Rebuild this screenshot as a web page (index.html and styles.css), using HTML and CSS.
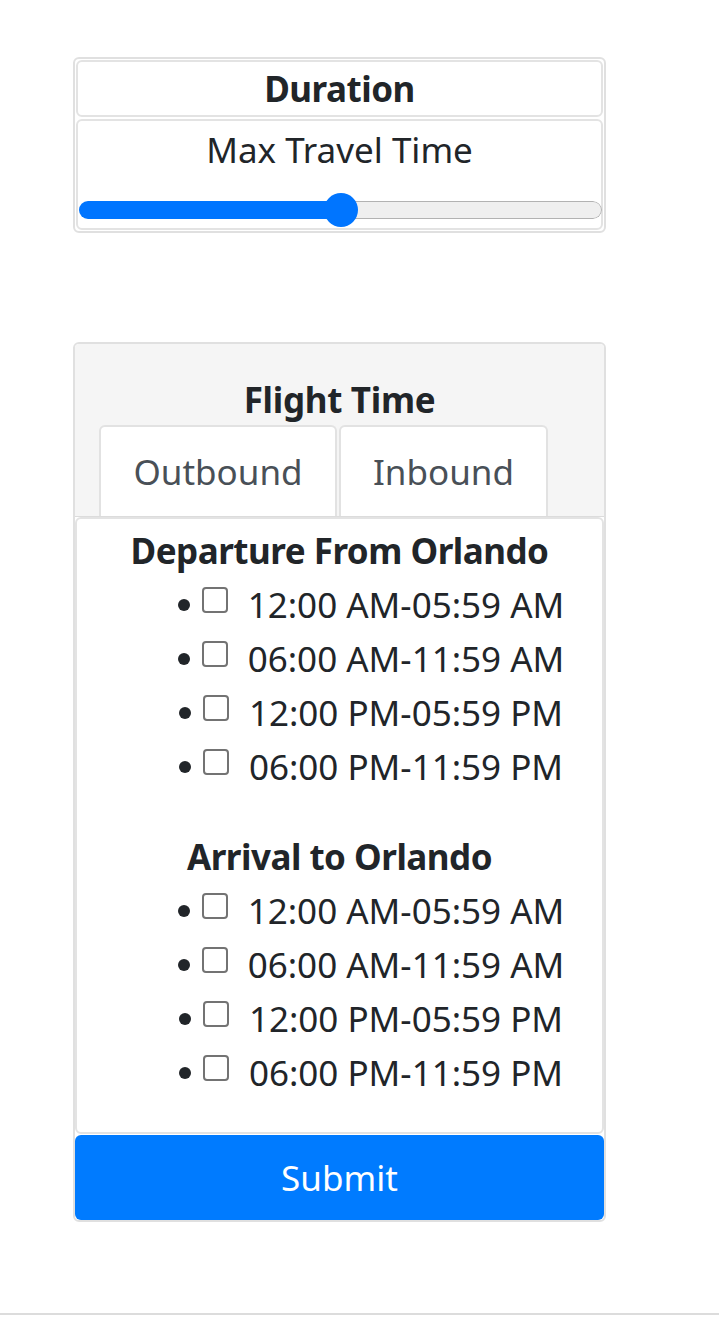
FILE: index.html
```html
<!DOCTYPE html>
<html lang="en">
<head>
<meta charset="utf-8">
<title>Flight filters</title>
<link rel="stylesheet" href="styles.css">
</head>
<body>
<div class="page">
  <section class="card duration">
    <div class="box duration-head">Duration</div>
    <div class="box duration-body">
      <div class="slider-label">Max Travel Time</div>
      <div class="slider" role="slider" aria-valuemin="0" aria-valuemax="100" aria-valuenow="50" aria-label="Max Travel Time">
        <div class="track">
          <div class="fill" style="width:50%"></div>
          <div class="rest"></div>
        </div>
        <div class="thumb" style="left:50%"></div>
      </div>
    </div>
  </section>

  <section class="card flight">
    <div class="flight-head">
      <div class="flight-title">Flight Time</div>
      <div class="tabs">
        <div class="tab tab-out">Outbound</div>
        <div class="tab tab-in">Inbound</div>
      </div>
    </div>
    <div class="box flight-body">
      <div class="group-title">Departure From Orlando</div>
      <ul class="times">
        <li><label><input type="checkbox">12:00 AM-05:59 AM</label></li>
        <li><label><input type="checkbox">06:00 AM-11:59 AM</label></li>
        <li><label><input type="checkbox">12:00 PM-05:59 PM</label></li>
        <li><label><input type="checkbox">06:00 PM-11:59 PM</label></li>
      </ul>
      <div class="group-title">Arrival to Orlando</div>
      <ul class="times last">
        <li><label><input type="checkbox">12:00 AM-05:59 AM</label></li>
        <li><label><input type="checkbox">06:00 AM-11:59 AM</label></li>
        <li><label><input type="checkbox">12:00 PM-05:59 PM</label></li>
        <li><label><input type="checkbox">06:00 PM-11:59 PM</label></li>
      </ul>
    </div>
    <button class="submit" type="button">Submit</button>
  </section>
</div>
<hr class="rule">
</body>
</html>
```

FILE: styles.css
```css
* {
  box-sizing: border-box;
}

body {
  margin: 0;
  background: #fff;
  color: #212529;
  font-family: "Noto Sans", "Open Sans", sans-serif;
  font-size: 35px;
  line-height: 54px;
}

.page {
  padding: 57px 0 0 73px;
}

.card {
  width: 533px;
  border: 2px solid #e0e0e0;
  border-radius: 6px;
  background: #fff;
}

.box {
  border: 2px solid #e3e3e3;
  border-radius: 6px;
  background: #fff;
}

/* Duration card */
.duration {
  padding: 1px;
}

.duration-head {
  text-align: center;
  font-weight: 700;
  letter-spacing: -0.5px;
  line-height: 53px;
}

.duration-body {
  margin-top: 2px;
  padding-top: 2px;
}

.slider-label {
  text-align: center;
}

.slider {
  position: relative;
  width: 523px;
  height: 34px;
  margin: 16px 0 1px 1px;
  padding-top: 8px;
}

.track {
  display: flex;
  height: 18px;
  border-radius: 9px;
  overflow: hidden;
}

.fill {
  background: #0075ff;
}

.rest {
  flex: 1;
  background: #efefef;
  border: 1px solid #b2b2b2;
  border-left: none;
  border-radius: 0 9px 9px 0;
}

.thumb {
  position: absolute;
  top: 0;
  width: 34px;
  height: 34px;
  margin-left: -17px;
  border-radius: 50%;
  background: #0075ff;
}

/* Flight time card */
.flight {
  margin-top: 109px;
  overflow: hidden;
}

.flight-head {
  background: #f5f5f5;
  padding-top: 29px;
  border-bottom: 1px solid #dcdcdc;
}

.flight-title {
  text-align: center;
  font-weight: 700;
  letter-spacing: -0.3px;
}

.tabs {
  display: flex;
  gap: 2px;
  margin: -2px 0 0 24px;
}

.tab {
  background: #fff;
  color: #495057;
  text-align: center;
  padding: 18px 0 17px;
  border: 2px solid #e2e2e2;
  border-bottom: none;
  border-radius: 6px 6px 0 0;
}

.tab-out {
  width: 238px;
}

.tab-in {
  width: 209px;
}

.flight-body {
  padding: 5px 0 32px;
}

.group-title {
  text-align: center;
  font-weight: 700;
  letter-spacing: -0.5px;
}

.times {
  list-style: none;
  margin: 0 0 36px;
  padding: 0 0 0 63px;
}

.times.last {
  margin-bottom: 0;
}

.times li {
  text-align: center;
}

.times li::before {
  content: "";
  display: inline-block;
  width: 12px;
  height: 12px;
  margin: 0 12px 7px 0;
  border-radius: 50%;
  background: #212529;
  vertical-align: baseline;
}

.times input {
  -webkit-appearance: none;
  appearance: none;
  width: 26px;
  height: 26px;
  margin: 0 20px 5px 0;
  border: 2px solid #737373;
  border-radius: 4px;
  background: #fff;
  vertical-align: baseline;
}

.submit {
  display: block;
  width: 100%;
  height: 85px;
  margin-top: 1px;
  border: none;
  border-radius: 6px;
  background: #007bff;
  color: #fff;
  font: inherit;
  cursor: pointer;
}

.rule {
  height: 2px;
  margin: 91px 0 0;
  border: none;
  background: #dcdcdc;
}
```
